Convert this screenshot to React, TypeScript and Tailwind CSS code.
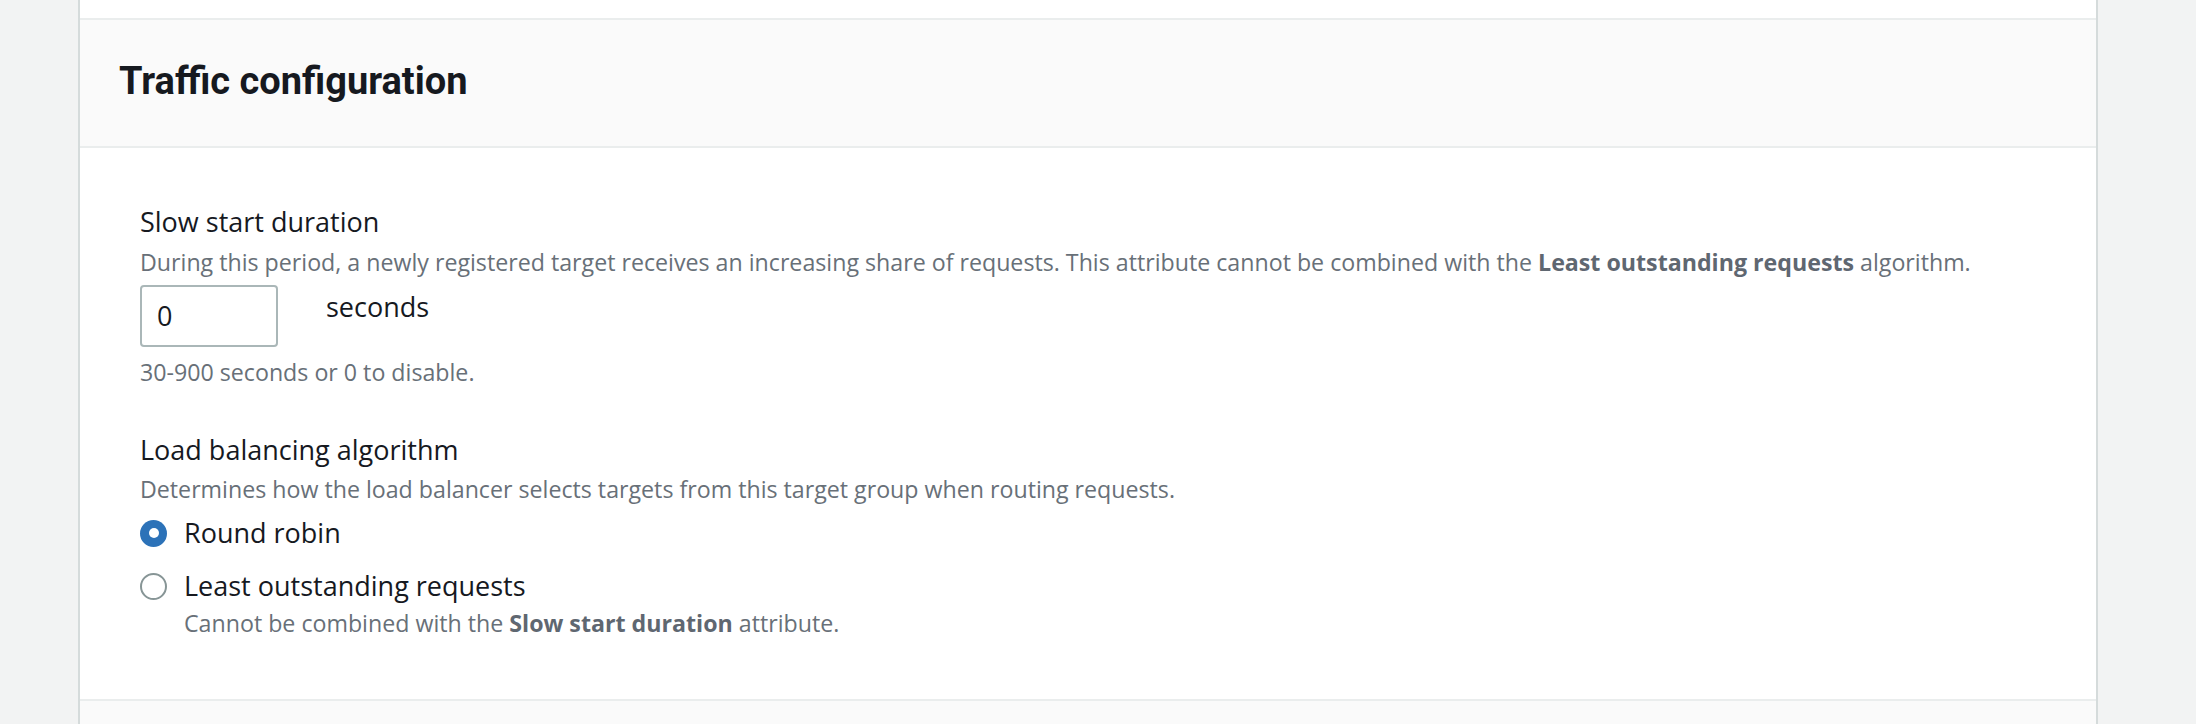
import React from "react";

export default function App() {
  const body = { fontFamily: "'Open Sans', 'Noto Sans', sans-serif" };
  const head = { fontFamily: "Roboto, 'Noto Sans', sans-serif" };
  return (
    <div className="w-[2196px] h-[724px] bg-[#f2f3f3] overflow-hidden" style={body}>
      <div className="ml-[78px] w-[2020px] h-full bg-white border-x-2 border-[#d5dbdb] flex flex-col">
        <div className="h-[18px] bg-white" />
        <div className="border-y-2 border-[#eaeded] bg-[#fafafa] pl-[39px] pt-[37px] pb-[41px]">
          <h2 className="text-[38px] leading-[48px] font-bold text-[#16191f]" style={head}>Traffic configuration</h2>
        </div>
        <div className="pl-[60px] pt-[54px] pb-[60px] border-b-2 border-[#eaeded]">
          <div className="text-[27px] leading-[40px] text-[#16191f]">Slow start duration</div>
          <div className="mt-[4px] text-[23.2px] leading-[32px] text-[#687078]">
            During this period, a newly registered target receives an increasing share of requests. This attribute cannot be combined with the <span className="font-bold text-[#5f6771]">Least outstanding requests</span> algorithm.
          </div>
          <div className="mt-[7px] flex items-start gap-[48px]">
            <div className="w-[138px] h-[62px] border-2 border-[#aab7b8] rounded-[4px] flex items-center pl-[15px] text-[27px] text-[#16191f]">0</div>
            <div className="mt-[4px] text-[27px] leading-[36px] text-[#16191f]">seconds</div>
          </div>
          <div className="mt-[9px] text-[23.2px] leading-[32px] text-[#687078]">30-900 seconds or 0 to disable.</div>

          <div className="mt-[42px] text-[27px] leading-[40px] text-[#16191f]">Load balancing algorithm</div>
          <div className="mt-[3px] text-[23.2px] leading-[32px] text-[#687078]">
            Determines how the load balancer selects targets from this target group when routing requests.
          </div>
          <div className="mt-[10px] flex items-center gap-[17px]">
            <div className="w-[27px] h-[27px] rounded-full bg-[#2c72b8] flex items-center justify-center">
              <div className="w-[10px] h-[10px] rounded-full bg-white" />
            </div>
            <div className="text-[27px] leading-[36px] text-[#16191f]">Round robin</div>
          </div>
          <div className="mt-[17px] flex items-center gap-[17px]">
            <div className="w-[27px] h-[27px] rounded-full border-2 border-[#879596] bg-white" />
            <div className="text-[27px] leading-[36px] text-[#16191f]">Least outstanding requests</div>
          </div>
          <div className="mt-[3px] pl-[44px] text-[23.2px] leading-[32px] text-[#687078]">
            Cannot be combined with the <span className="font-bold text-[#5f6771]">Slow start duration</span> attribute.
          </div>
        </div>
        <div className="flex-1 bg-[#fafafa]" />
      </div>
    </div>
  );
}
